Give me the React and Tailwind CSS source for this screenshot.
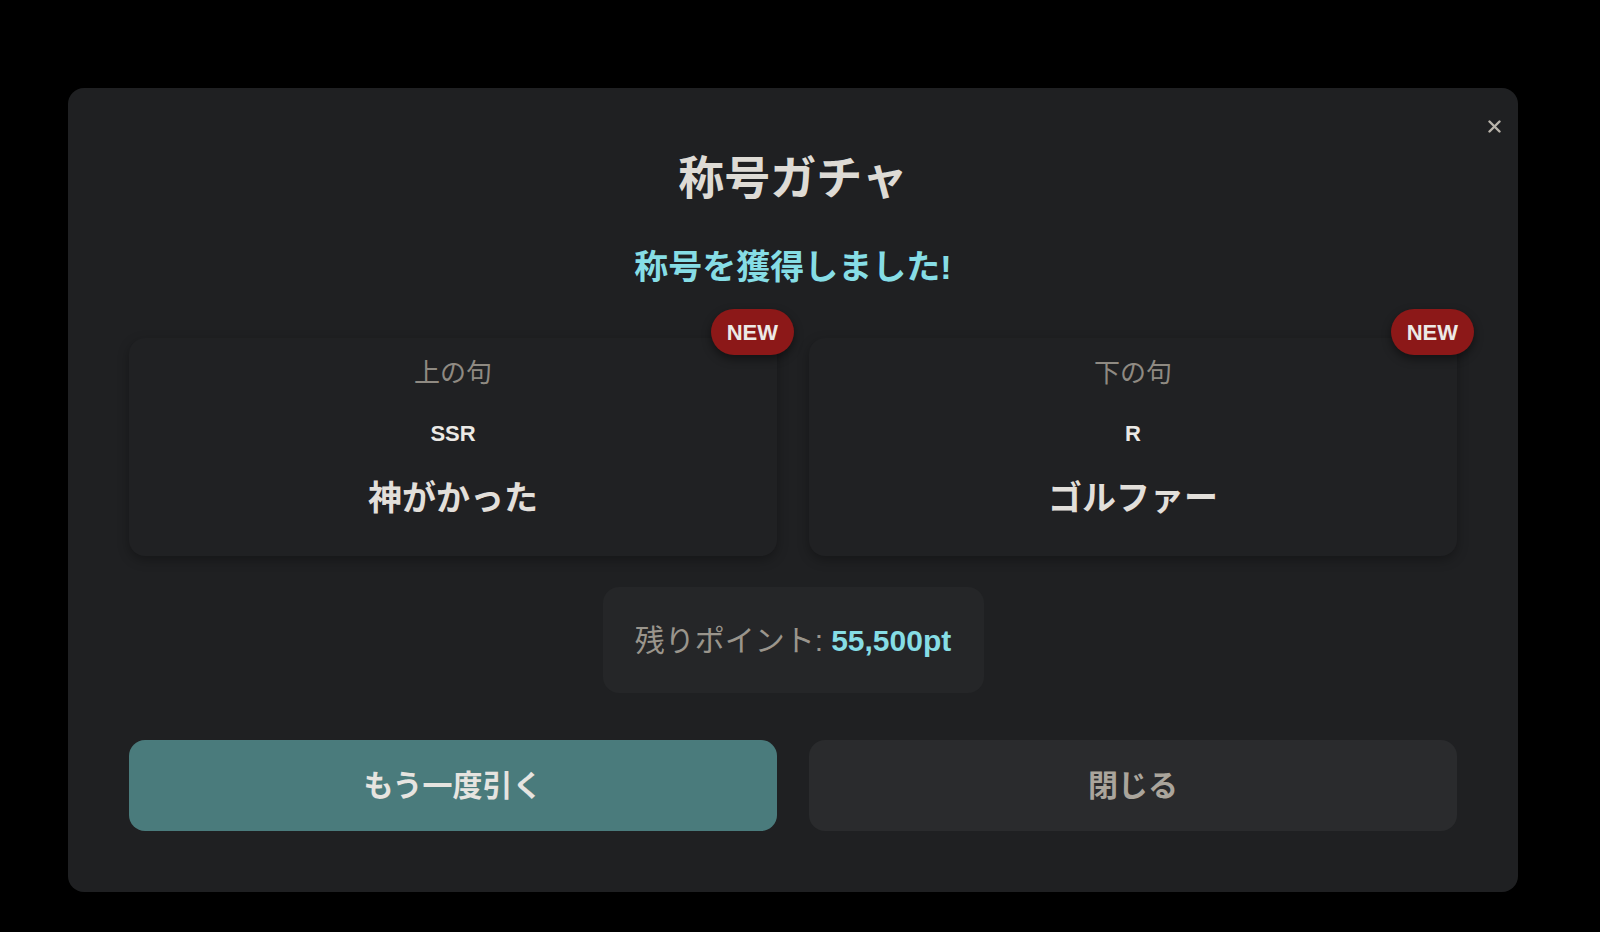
import React from "react";

const cards = [
  { label: "上の句", rarity: "SSR", name: "神がかった" },
  { label: "下の句", rarity: "R", name: "ゴルファー" },
];

const TitleCard = ({ label, rarity, name }) => {
  return (
    <div className="relative flex flex-col items-center rounded-2xl bg-[#202123] pt-[17px] pb-[36px] shadow-[0_4px_12px_rgba(0,0,0,0.3)]">
      <span className="absolute -top-[29px] -right-[17px] flex h-[46px] items-center rounded-full bg-[#8c1818] px-4 text-[22px] font-bold text-[#ece9e6] shadow-[0_4px_10px_rgba(0,0,0,0.45)]">
        NEW
      </span>
      <p className="text-[26px] leading-[36px] text-[#8f8a82]">{label}</p>
      <p className="mt-[28px] text-[22px] font-bold leading-[30px] text-[#ebe9e5]">
        {rarity}
      </p>
      <p className="mt-[27px] text-[34px] font-bold leading-[44px] text-[#e2dfda]">
        {name}
      </p>
    </div>
  );
};

const App = () => {
  return (
    <div
      className="min-h-screen bg-black pl-[68px] pt-[88px] pb-[40px]"
      style={{ fontFamily: '"Liberation Sans", "Noto Sans CJK JP", sans-serif' }}
    >
      <div className="relative w-[1450px] rounded-2xl bg-[#1f2022] px-[61px] pt-[63px] pb-[61px]">
        {/* close */}
        <button className="absolute top-[31px] right-[17px] flex h-[14px] w-[14px] items-center justify-center text-[#b8b3aa]">
          <svg width="13" height="13" viewBox="0 0 13 13" fill="none">
            <path
              d="M1.5 1.5L11.5 11.5M11.5 1.5L1.5 11.5"
              stroke="currentColor"
              strokeWidth="2.4"
              strokeLinecap="round"
            />
          </svg>
        </button>

        <h1 className="text-center text-[46px] font-bold leading-[54px] text-[#dedbd5]">
          称号ガチャ
        </h1>
        <p className="mt-[42px] text-center text-[34px] font-bold leading-[40px] text-[#86dde5]">
          称号を獲得しました!
        </p>

        <div className="mt-[51px] grid grid-cols-2 gap-8">
          {cards.map((c) => (
            <TitleCard key={c.label} {...c} />
          ))}
        </div>

        <div className="mt-[31px] flex justify-center">
          <div className="flex h-[106px] w-[381px] items-center justify-center rounded-2xl bg-[#252628] text-[30px]">
            <span className="text-[#9a958c]">残りポイント: </span>
            <span className="ml-[8px] font-bold text-[#86dde5]">55,500pt</span>
          </div>
        </div>

        <div className="mt-[47px] grid grid-cols-2 gap-8">
          <button className="h-[91px] rounded-2xl bg-[#4a7b7c] text-[30px] font-bold text-[#e6e4e0]">
            もう一度引く
          </button>
          <button className="h-[91px] rounded-2xl bg-[#2a2b2d] text-[30px] font-bold text-[#aaa59c]">
            閉じる
          </button>
        </div>
      </div>
    </div>
  );
};

export default App;
